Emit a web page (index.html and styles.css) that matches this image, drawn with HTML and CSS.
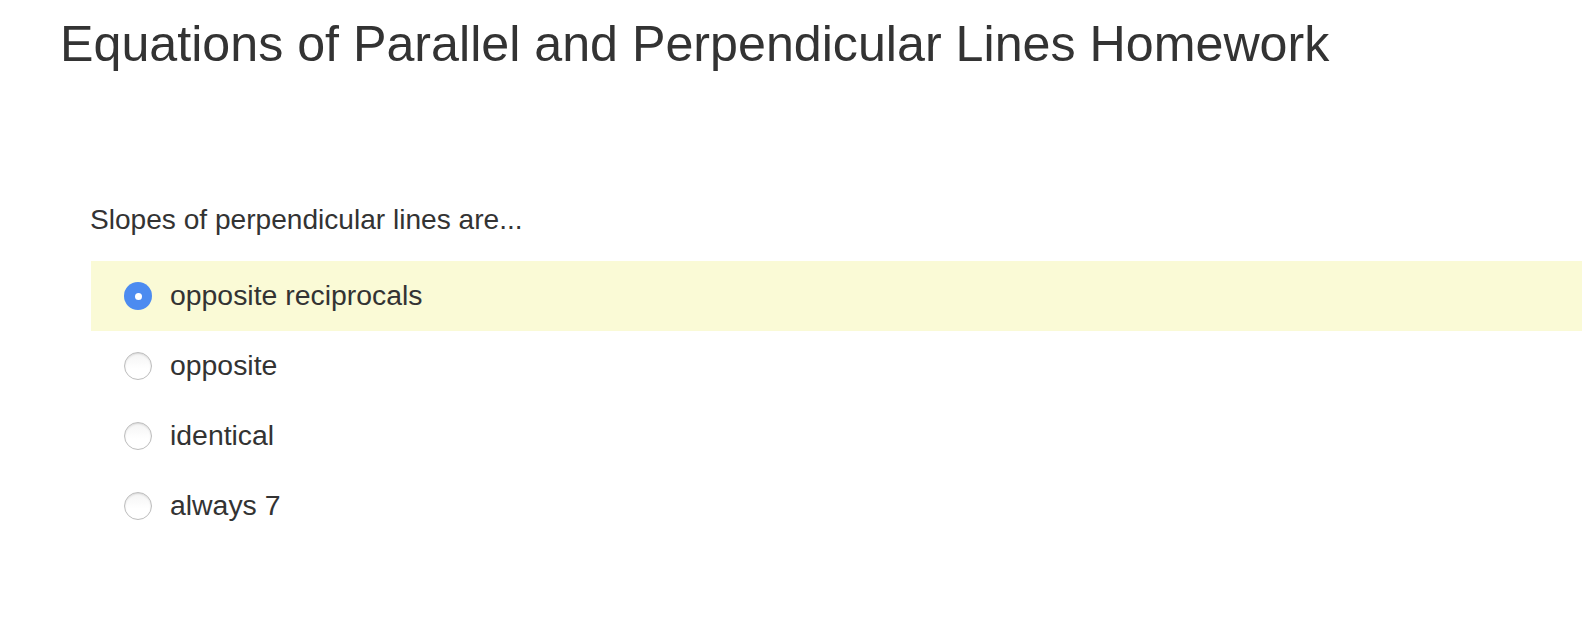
FILE: index.html
```html
<!DOCTYPE html>
<html>
<head>
<meta charset="utf-8">
<link rel="stylesheet" href="styles.css">
</head>
<body>
<div class="page">
  <h1 class="title">Equations of Parallel and Perpendicular Lines Homework</h1>
  <div class="question">
    <p class="prompt">Slopes of perpendicular lines are...</p>
    <ul class="options">
      <li class="option selected"><span class="radio checked"></span><span class="label">opposite reciprocals</span></li>
      <li class="option"><span class="radio"></span><span class="label">opposite</span></li>
      <li class="option"><span class="radio"></span><span class="label">identical</span></li>
      <li class="option"><span class="radio"></span><span class="label">always 7</span></li>
    </ul>
  </div>
</div>
</body>
</html>
```

FILE: styles.css
```css
html, body {
  margin: 0;
  padding: 0;
  background: #ffffff;
}
body {
  font-family: "Liberation Sans", Arial, Helvetica, sans-serif;
  color: #333333;
}
.page {
  padding-top: 16px;
}
.title {
  margin: 0;
  padding-left: 60px;
  font-size: 50.2px;
  font-weight: normal;
  line-height: 57.5px;
  color: #333333;
}
.question {
  margin-top: 129px;
}
.prompt {
  margin: 0;
  padding-left: 90px;
  font-size: 28.1px;
  line-height: 33.6px;
}
.options {
  list-style: none;
  margin: 25px 0 0 91px;
  padding: 0;
}
.option {
  display: flex;
  align-items: center;
  height: 70px;
  padding-left: 33px;
  gap: 18px;
  font-size: 28.4px;
}
.option.selected {
  background: #fafad6;
}
.radio {
  box-sizing: border-box;
  width: 28px;
  height: 28px;
  border-radius: 50%;
  border: 1px solid #bdbdbd;
  background: linear-gradient(#f4f4f4, #ffffff 60%);
  box-shadow: inset 0 1px 2px rgba(0,0,0,0.12);
  display: flex;
  align-items: center;
  justify-content: center;
  flex: none;
}
.radio.checked {
  border: none;
  background: #4c8bf0;
  box-shadow: none;
}
.radio.checked::after {
  content: "";
  width: 7px;
  height: 7px;
  border-radius: 50%;
  background: #ffffff;
}
.label {
  line-height: 32px;
  position: relative;
  top: -1px;
}
```
